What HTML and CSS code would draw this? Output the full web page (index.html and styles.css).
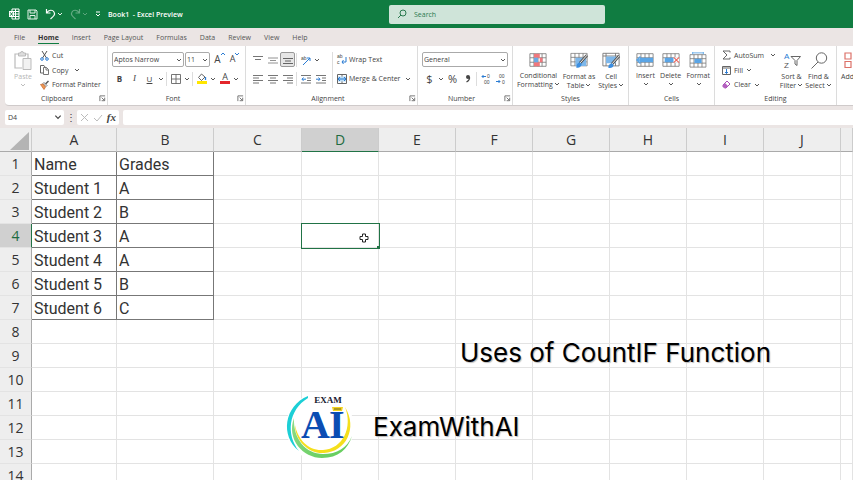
FILE: index.html
```html
<!DOCTYPE html>
<html lang="en">
<head>
<meta charset="UTF-8">
<meta name="viewport" content="width=device-width, initial-scale=1.0">
<title>Book1 - Excel Preview</title>
<link rel="stylesheet" href="styles.css">
</head>
<body>

<!-- shared icons -->
<svg class="defs" aria-hidden="true">
  <symbol id="caret" viewBox="0 0 6 6"><path d="M1 2l2 2 2-2" fill="none" stroke="currentColor" stroke-width=".9"/></symbol>
  <symbol id="launch" viewBox="0 0 8 8"><path d="M1 7V1h6M3 3l3 3M6.500 3v3.500H3" fill="none" stroke="#555" stroke-width=".9"/></symbol>
  <symbol id="sheet" viewBox="0 0 20 16"><path d="M1 1h18v14H1zM1 5.500h18M1 10.500h18M5.500 1v14M10 1v14M14.500 1v14" fill="#fff" stroke="#777" stroke-width=".9"/></symbol>
</svg>

<header class="titlebar">
  <div class="quick">
    <svg class="i-excel" width="12" height="12" viewBox="0 0 12 12"><path d="M4 1h7v10H4zM4 3.500h7M4 6h7M4 8.500h7M7.500 1v10" fill="none" stroke="#fff"/><path d="M1 3h5v6H1z" fill="#fff"/><path d="M2.200 4.300l2.600 3.400M4.800 4.300L2.200 7.700" stroke="#107c41"/></svg>
    <button class="qbtn i-save" aria-label="Save"><svg width="11" height="11" viewBox="0 0 11 11"><path d="M1 1h8l1 1v8H1zM3 1v3h5V1M3 10V6.500h5V10" fill="none" stroke="#e4f2ea"/></svg></button>
    <button class="qbtn" aria-label="Undo"><svg width="11" height="12" viewBox="0 0 11 12"><path d="M1.500 1v4h4M1.500 5C4 1.500 7.500 1.500 9 4s0 4-3.500 7" fill="none" stroke="#fff" stroke-width="1.200"/></svg><svg width="6" height="6"><use href="#caret"/></svg></button>
    <button class="qbtn faded" aria-label="Redo"><svg width="11" height="12" viewBox="0 0 11 12"><path d="M9.500 1v4h-4M9.500 5C7 1.500 3.500 1.500 2 4s0 4 3.500 7" fill="none" stroke="#fff" stroke-width="1.200"/></svg><svg width="6" height="6"><use href="#caret"/></svg></button>
    <button class="qbtn" aria-label="Customize"><svg width="6" height="6" viewBox="0 0 6 6"><path d="M1 1h4M1 3l2 2 2-2" fill="none" stroke="#fff"/></svg></button>
    <span class="book">Book1 &nbsp;- Excel Preview</span>
  </div>
  <label class="search">
    <svg width="10" height="10" viewBox="0 0 10 10"><circle cx="6" cy="4" r="3" fill="none" stroke="#2b7a50"/><path d="M4 6L1 9" stroke="#2b7a50"/></svg>
    <input type="text" placeholder="Search" aria-label="Search">
  </label>
</header>

<nav class="tabs">
  <a href="#">File</a>
  <a href="#" class="active">Home</a>
  <a href="#">Insert</a>
  <a href="#">Page Layout</a>
  <a href="#">Formulas</a>
  <a href="#">Data</a>
  <a href="#">Review</a>
  <a href="#">View</a>
  <a href="#">Help</a>
</nav>

<section class="ribbon">
  <div class="group clipboard">
    <div class="tools">
      <button class="big paste"><svg width="18" height="20" viewBox="0 0 18 20"><path d="M5 3H1v14h7M11 3h3v4" fill="none" stroke="#bbb" stroke-width="1.200"/><path d="M4.500 2h2a1.500 1.500 0 013 0h2v3h-7z" fill="#ddd" stroke="#bbb"/><path d="M9 7.500h8v11H9z" fill="#f2f2f2" stroke="#bbb"/></svg><span>Paste</span><svg width="6" height="6"><use href="#caret"/></svg></button>
      <div class="rows three">
        <button class="tool"><svg width="9" height="11" viewBox="0 0 9 11"><path d="M2 1l4.500 7M7 1L2.500 8" stroke="#555"/><circle cx="2" cy="9" r="1.300" fill="none" stroke="#2b7cd3"/><circle cx="7" cy="9" r="1.300" fill="none" stroke="#2b7cd3"/></svg>Cut</button>
        <button class="tool"><svg width="9" height="10" viewBox="0 0 9 10"><path d="M3 8H.5V.5H4L5 2" fill="none" stroke="#666"/><path d="M3.500 2.500h3l2 2v5h-5zM6 2.500v2.500h2.500" fill="#fff" stroke="#666" stroke-width=".9"/></svg>Copy<svg class="gap" width="6" height="6"><use href="#caret"/></svg></button>
        <button class="tool"><svg width="9" height="10" viewBox="0 0 9 10"><path d="M8.500 1L5.500 4" stroke="#555" stroke-width="1.500"/><path d="M4 2.500l3 3-1 1-3-3z" fill="#fff" stroke="#555" stroke-width=".8"/><path d="M.5 4.500L3 4l2.500 3L4 9.500z" fill="#ef9a55" stroke="#c4632a" stroke-width=".7"/></svg>Format Painter</button>
      </div>
    </div>
    <div class="caption"><span>Clipboard</span><svg width="7" height="7"><use href="#launch"/></svg></div>
  </div>

  <div class="group font">
    <div class="tools rows">
      <div class="row">
        <span class="combo name"><select aria-label="Font"><option>Aptos Narrow</option></select><svg width="6" height="6"><use href="#caret"/></svg></span>
        <span class="combo size"><select aria-label="Font size"><option>11</option></select><svg width="6" height="6"><use href="#caret"/></svg></span>
        <button class="ic grow" aria-label="Increase font size">A<svg width="4" height="4" viewBox="0 0 4 4"><path d="M0 3l2-2 2 2" fill="none" stroke="#2b7cd3"/></svg></button>
        <button class="ic shrink" aria-label="Decrease font size">A<svg width="4" height="4" viewBox="0 0 4 4"><path d="M0 1l2 2 2-2" fill="none" stroke="#2b7cd3"/></svg></button>
      </div>
      <div class="row">
        <button class="ic"><b>B</b></button>
        <button class="ic serif"><i>I</i></button>
        <button class="ic"><u>U</u></button>
        <button class="drop" aria-label="Underline style"><svg width="6" height="6"><use href="#caret"/></svg></button>
        <span class="sep"></span>
        <button class="ic" aria-label="Borders"><svg width="10" height="10" viewBox="0 0 10 10"><path d="M.5.500h9v9h-9zM5 0v10M0 5h10" fill="none" stroke="#666" stroke-width=".9"/></svg></button>
        <button class="drop" aria-label="More borders"><svg width="6" height="6"><use href="#caret"/></svg></button>
        <span class="sep"></span>
        <button class="ic" aria-label="Fill color"><svg width="10" height="11" viewBox="0 0 10 11"><path d="M4.500 1l3.500 3-3.500 3.500L1.500 4.500z" fill="#fff" stroke="#666"/><path d="M8.500 4v3" stroke="#2b7cd3" stroke-width="1.300"/><path d="M0 8h10v3H0z" fill="#ffe600"/></svg></button>
        <button class="drop" aria-label="More fill colors"><svg width="6" height="6"><use href="#caret"/></svg></button>
        <button class="ic fcolor" aria-label="Font color">A</button>
        <button class="drop" aria-label="More font colors"><svg width="6" height="6"><use href="#caret"/></svg></button>
      </div>
    </div>
    <div class="caption"><span>Font</span><svg width="7" height="7"><use href="#launch"/></svg></div>
  </div>

  <div class="group align">
    <div class="tools">
      <div class="rows">
        <div class="row">
          <button class="ic" aria-label="Top align"><svg width="10" height="10" viewBox="0 0 10 10"><path d="M0 1.500h10M2 4.500h6" stroke="#666" stroke-width=".9"/></svg></button>
          <button class="ic" aria-label="Middle align"><svg width="10" height="10" viewBox="0 0 10 10"><path d="M0 3h10M2 5.500h6M0 8h10" stroke="#777" stroke-width=".8"/></svg></button>
          <button class="ic pressed" aria-label="Bottom align"><svg width="10" height="10" viewBox="0 0 10 10"><path d="M0 3.500h10M2 6h6M0 8.500h10" stroke="#555" stroke-width=".9"/></svg></button>
          <span class="sep"></span>
          <button class="ic" aria-label="Orientation"><svg width="10" height="10" viewBox="0 0 10 10"><text class="mini" x="0" y="5">ab</text><path d="M2 10l7-7M9 6V3H6" fill="none" stroke="#2b7cd3"/></svg></button>
          <button class="drop" aria-label="More orientation"><svg width="6" height="6"><use href="#caret"/></svg></button>
        </div>
        <div class="row">
          <button class="ic" aria-label="Align left"><svg width="10" height="10" viewBox="0 0 10 10"><path d="M0 1.500h10M0 4h6M0 6.500h10M0 9h6" stroke="#666" stroke-width=".9"/></svg></button>
          <button class="ic" aria-label="Center"><svg width="10" height="10" viewBox="0 0 10 10"><path d="M0 1.500h10M2 4h6M0 6.500h10M2 9h6" stroke="#666" stroke-width=".9"/></svg></button>
          <button class="ic" aria-label="Align right"><svg width="10" height="10" viewBox="0 0 10 10"><path d="M0 1.500h10M4 4h6M0 6.500h10M4 9h6" stroke="#666" stroke-width=".9"/></svg></button>
          <span class="sep"></span>
          <button class="ic" aria-label="Decrease indent"><svg width="10" height="10" viewBox="0 0 10 10"><path d="M0 1.500h10M6 4h4M6 6.500h4M0 9h10" stroke="#666" stroke-width=".9"/><path d="M5 5.200H1M2.500 3.500L1 5.200l1.500 1.700" fill="none" stroke="#2b7cd3"/></svg></button>
          <button class="ic" aria-label="Increase indent"><svg width="10" height="10" viewBox="0 0 10 10"><path d="M0 1.500h10M6 4h4M6 6.500h4M0 9h10" stroke="#666" stroke-width=".9"/><path d="M0 5.200h4M2.500 3.500L4 5.200 2.500 6.900" fill="none" stroke="#2b7cd3"/></svg></button>
        </div>
      </div>
      <span class="sep tall"></span>
      <div class="rows wrap">
        <button class="tool row"><svg width="10" height="11" viewBox="0 0 10 11"><text class="mini" x="0" y="4">ab</text><text class="mini" x="0" y="10">c</text><path d="M9 3v5H5M6.500 6L5 8l1.500 2" fill="none" stroke="#2b7cd3"/></svg>Wrap Text</button>
        <button class="tool row"><svg width="10" height="10" viewBox="0 0 10 10"><path d="M.5.500h9v9h-9zM5 .5v9" fill="none" stroke="#666"/><path d="M1 2.500h8v5H1z" fill="#b9dcf6"/><path d="M1 5h8M3 3L1 5l2 2M7 3l2 2-2 2" fill="none" stroke="#2b7cd3"/></svg>Merge &amp; Center<svg class="gap" width="6" height="6"><use href="#caret"/></svg></button>
      </div>
    </div>
    <div class="caption"><span>Alignment</span><svg width="7" height="7"><use href="#launch"/></svg></div>
  </div>

  <div class="group number">
    <div class="tools rows">
      <div class="row">
        <span class="combo format"><select aria-label="Number format"><option>General</option></select><svg width="6" height="6"><use href="#caret"/></svg></span>
      </div>
      <div class="row signs">
        <button class="ic">$</button>
        <button class="drop" aria-label="More currencies"><svg width="6" height="6"><use href="#caret"/></svg></button>
        <button class="ic pct">%</button>
        <button class="ic" aria-label="Comma style"><svg width="6" height="9" viewBox="0 0 6 9"><circle cx="3" cy="3" r="2" fill="#444"/><path d="M4.500 3q.5 3-3 5" fill="none" stroke="#444" stroke-width="1.200"/></svg></button>
        <span class="sep"></span>
        <button class="ic" aria-label="Increase decimal"><svg width="10" height="10" viewBox="0 0 10 10"><text class="mini" x="6" y="4">0</text><text class="mini" x="3" y="10">00</text><path d="M5 2.500H1M2.500 1L1 2.500 2.500 4" fill="none" stroke="#2b7cd3"/></svg></button>
        <button class="ic" aria-label="Decrease decimal"><svg width="10" height="10" viewBox="0 0 10 10"><text class="mini" x="3" y="4">00</text><text class="mini" x="6" y="10">0</text><path d="M0 7.500h4M2.500 6L4 7.500 2.500 9" fill="none" stroke="#2b7cd3"/></svg></button>
      </div>
    </div>
    <div class="caption"><span>Number</span><svg width="7" height="7"><use href="#launch"/></svg></div>
  </div>

  <div class="group styles">
    <div class="tools">
      <button class="big"><svg width="18" height="16" viewBox="0 0 20 16"><use href="#sheet"/><path d="M5.500 1H12v4.500H5.500zM5.500 10.500H12V15H5.500z" fill="#f0777c"/><path d="M5.500 5.500H10v5H5.500z" fill="#6aa9e6"/><path d="M12 5.500h3v5h-3z" fill="#f0777c"/></svg><span>Conditional<br>Formatting<svg width="6" height="6"><use href="#caret"/></svg></span></button>
      <button class="big"><svg width="18" height="17" viewBox="0 0 20 18"><use href="#sheet" width="20" height="16"/><path d="M6 6h12v9H6z" fill="#7db7ea"/><path d="M19 3l-8 9" stroke="#555" stroke-width="3"/><path d="M19 3l-8 9" stroke="#fff"/><path d="M11 11q-4 1-4 6 5 1 6-4z" fill="#3b8ee0"/></svg><span>Format as<br>Table<svg width="6" height="6"><use href="#caret"/></svg></span></button>
      <button class="big"><svg width="18" height="17" viewBox="0 0 20 18"><path d="M1 1h18v14H1zM1 4h18M4.500 1v14M15 1v14" fill="#fff" stroke="#777"/><path d="M4.500 4.500h11V12h-11z" fill="#7db7ea"/><path d="M19 4l-8 9" stroke="#555" stroke-width="3"/><path d="M19 4l-8 9" stroke="#fff"/><path d="M11 12q-4 1-4 5 5 1 6-3z" fill="#3b8ee0"/></svg><span>Cell<br>Styles<svg width="6" height="6"><use href="#caret"/></svg></span></button>
    </div>
    <div class="caption"><span>Styles</span></div>
  </div>

  <div class="group cells">
    <div class="tools">
      <button class="big"><svg width="18" height="16" viewBox="0 0 20 16"><use href="#sheet"/><path d="M4 5.500h15v5H4z" fill="#5aa5e6"/><path d="M5 4L1 8l4 4M1 8h6" fill="none" stroke="#5aa5e6" stroke-width="1.500"/></svg><span>Insert<br><svg width="6" height="6"><use href="#caret"/></svg></span></button>
      <button class="big"><svg width="18" height="16" viewBox="0 0 20 16"><use href="#sheet"/><path d="M3 5.500h10v5H3z" fill="#5aa5e6"/><path d="M13 5h6v6h-6z" fill="#fff"/><path d="M13 5l6 6M19 5l-6 6" stroke="#e8665d" stroke-width="1.300"/></svg><span>Delete<br><svg width="6" height="6"><use href="#caret"/></svg></span></button>
      <button class="big"><svg width="18" height="16" viewBox="0 0 20 18"><use href="#sheet" y="2" width="20" height="16"/><path d="M6 7.500h8v5H6z" fill="#5aa5e6"/><path d="M4 1h12M4 0v2.500M16 0v2.500" stroke="#5aa5e6"/></svg><span>Format<br><svg width="6" height="6"><use href="#caret"/></svg></span></button>
    </div>
    <div class="caption"><span>Cells</span></div>
  </div>

  <div class="group editing">
    <div class="tools">
      <div class="rows three">
        <button class="tool"><svg width="9" height="10" viewBox="0 0 9 10"><path d="M8 2.500V1H1l4 4-4 4h7V7.500" fill="none" stroke="#666"/></svg>AutoSum<svg class="gap" width="6" height="6"><use href="#caret"/></svg></button>
        <button class="tool"><svg width="9" height="9" viewBox="0 0 9 9"><path d="M.5.500h8v8h-8zM.5 2h8" fill="none" stroke="#666"/><path d="M4.500 3v4.500M3 6l1.500 1.500L6 6" fill="none" stroke="#2b7cd3"/></svg>Fill<svg width="6" height="6"><use href="#caret"/></svg></button>
        <button class="tool"><svg width="9" height="9" viewBox="0 0 9 9"><path d="M1 5l4-4 3 3-4 4H2.500L1 6.500z" fill="#fff" stroke="#a94fb5"/><path d="M1 5l2-2 3 3-2 2H2.500L1 6.500z" fill="#b45fc0"/></svg>Clear<svg width="6" height="6"><use href="#caret"/></svg></button>
      </div>
      <button class="big"><svg width="18" height="17" viewBox="0 0 18 17"><text class="az" x="1" y="7" fill="#2b7cd3">A</text><text class="az" x="1" y="16" fill="#555">Z</text><path d="M8 4.500h9.500l-3.500 4v5l-2-1.500V8.500z" fill="#fff" stroke="#666"/></svg><span>Sort &amp;<br>Filter<svg width="6" height="6"><use href="#caret"/></svg></span></button>
      <button class="big"><svg width="18" height="17" viewBox="0 0 18 17"><circle cx="11.500" cy="6" r="5.200" fill="none" stroke="#666"/><path d="M8 10l-6.500 6.500" stroke="#666"/></svg><span>Find &amp;<br>Select<svg width="6" height="6"><use href="#caret"/></svg></span></button>
    </div>
    <div class="caption"><span>Editing</span></div>
  </div>

  <div class="group addins">
    <div class="tools">
      <button class="big"><svg width="18" height="17" viewBox="0 0 18 17"><path d="M1 1h6v6H1zM1 9.500h6v6H1zM10 9.500h6v6h-6zM13 1l3 3-3 3-3-3z" fill="#fff" stroke="#dc7168" stroke-width="1.200"/></svg><span>Add-ins</span></button>
    </div>
    <div class="caption"><span>Add-ins</span></div>
  </div>
</section>

<section class="formulabar">
  <label class="namebox"><input type="text" value="D4" aria-label="Name box"><svg width="8" height="8" viewBox="0 0 6 6"><use href="#caret"/></svg></label>
  <span class="dots">&#8942;</span>
  <div class="fxbox">
    <button aria-label="Cancel"><svg width="9" height="9" viewBox="0 0 9 9"><path d="M1 1l7 7M8 1L1 8" stroke="#bbb"/></svg></button>
    <button aria-label="Enter"><svg width="10" height="9" viewBox="0 0 10 9"><path d="M1 5l3 3 5-6" fill="none" stroke="#bbb"/></svg></button>
    <button class="fx">fx</button>
  </div>
  <input class="formula" type="text" aria-label="Formula">
</section>

<main class="grid">
  <table class="cells-table">
    <colgroup>
      <col class="c-head"><col class="c-a"><col class="c-b"><col class="c-c">
      <col class="c-std"><col class="c-std"><col class="c-std"><col class="c-std"><col class="c-std"><col class="c-std"><col class="c-std"><col>
    </colgroup>
    <thead>
      <tr><th class="corner"><svg width="19" height="18" viewBox="0 0 19 18"><path d="M19 0v18H0z" fill="#b4b4b4"/></svg></th><th>A</th><th>B</th><th>C</th><th class="sel">D</th><th>E</th><th>F</th><th>G</th><th>H</th><th>I</th><th>J</th><th></th></tr>
    </thead>
    <tbody>
      <tr><th>1</th><td class="data">Name</td><td class="data">Grades</td><td></td><td></td><td></td><td></td><td></td><td></td><td></td><td></td><td></td></tr>
      <tr><th>2</th><td class="data">Student 1</td><td class="data">A</td><td></td><td></td><td></td><td></td><td></td><td></td><td></td><td></td><td></td></tr>
      <tr><th>3</th><td class="data">Student 2</td><td class="data">B</td><td></td><td></td><td></td><td></td><td></td><td></td><td></td><td></td><td></td></tr>
      <tr><th class="sel">4</th><td class="data">Student 3</td><td class="data">A</td><td></td><td class="current"><svg class="cursor" width="10" height="10" viewBox="0 0 10 10"><path d="M3.500 1h3v2.500H9v3H6.500V9h-3V6.500H1v-3h2.500z" fill="#fff" stroke="#222"/></svg></td><td></td><td></td><td></td><td></td><td></td><td></td><td></td></tr>
      <tr><th>5</th><td class="data">Student 4</td><td class="data">A</td><td></td><td></td><td></td><td></td><td></td><td></td><td></td><td></td><td></td></tr>
      <tr><th>6</th><td class="data">Student 5</td><td class="data">B</td><td></td><td></td><td></td><td></td><td></td><td></td><td></td><td></td><td></td></tr>
      <tr><th>7</th><td class="data">Student 6</td><td class="data">C</td><td></td><td></td><td></td><td></td><td></td><td></td><td></td><td></td><td></td></tr>
      <tr><th>8</th><td></td><td></td><td></td><td></td><td></td><td></td><td></td><td></td><td></td><td></td><td></td></tr>
      <tr><th>9</th><td></td><td></td><td></td><td></td><td></td><td></td><td></td><td></td><td></td><td></td><td></td></tr>
      <tr><th>10</th><td></td><td></td><td></td><td></td><td></td><td></td><td></td><td></td><td></td><td></td><td></td></tr>
      <tr><th>11</th><td></td><td></td><td></td><td></td><td></td><td></td><td></td><td></td><td></td><td></td><td></td></tr>
      <tr><th>12</th><td></td><td></td><td></td><td></td><td></td><td></td><td></td><td></td><td></td><td></td><td></td></tr>
      <tr><th>13</th><td></td><td></td><td></td><td></td><td></td><td></td><td></td><td></td><td></td><td></td><td></td></tr>
      <tr><th>14</th><td></td><td></td><td></td><td></td><td></td><td></td><td></td><td></td><td></td><td></td><td></td></tr>
    </tbody>
  </table>

  <div class="overlay headline">Uses of CountIF Function</div>
  <div class="overlay brand">
    <svg width="68" height="68" viewBox="0 0 68 68">
      <defs><linearGradient id="ring" x1="0" y1="0" x2="1" y2="1"><stop offset="0" stop-color="#8fdc8a"/><stop offset="1" stop-color="#5fcb57"/></linearGradient></defs>
      <circle cx="34" cy="34" r="34" fill="#fff"/>
      <path d="M22 3C-2 13-6 43 13 58 0 42 2 17 22 5z" fill="#1ccfd6"/>
      <path d="M8 25C0 46 17 65 36 65c16 0 26-9 30-22-5 12-15 18-29 18C20 61 7 46 8 25z" fill="url(#ring)"/>
      <path d="M9 32C9 47 22 61 38 60 60 59 72 35 59 14c8 20-2 42-22 43C23 58 12 47 9 32z" fill="#f5df1c"/>
      <text class="logo-top" x="42" y="10" text-anchor="middle">EXAM</text>
      <text class="logo-main" x="15" y="45">A</text>
      <text class="logo-main" x="43" y="45">I</text>
      <path d="M46 14h11l-1 4h-9z" fill="#f3d21c"/><path d="M48 16h7" stroke="#6b6420"/>
    </svg>
    <span>ExamWithAI</span>
  </div>
</main>

</body>
</html>
```
FILE: styles.css
```css
* {
  box-sizing: border-box;
}
body {
  margin: 0;
  height: 100vh;
  overflow: hidden;
  display: flex;
  flex-direction: column;
  background: #ebe5e4;
  color: #444;
  font-family: "Open Sans", "Noto Sans", sans-serif;
  font-size: 7px;
  line-height: 9px;
}
button, input, select {
  font: inherit;
  color: inherit;
  margin: 0;
  padding: 0;
  border: none;
  background: none;
}
svg {
  flex: none;
  display: block;
  overflow: visible;
}
.defs {
  position: absolute;
  width: 0;
  height: 0;
}

/* title bar */
.titlebar {
  flex: none;
  height: 28px;
  display: flex;
  align-items: center;
  background: #107c41;
  color: #fff;
}
.quick {
  flex: 0 0 389px;
  display: flex;
  align-items: center;
  gap: 7px;
  padding-left: 8px;
}
.qbtn {
  display: flex;
  align-items: center;
  gap: 1px;
}
.faded {
  opacity: 0.35;
}
.book {
  font-weight: 600;
}
.search {
  flex: 0 1 216px;
  height: 19px;
  display: flex;
  align-items: center;
  gap: 7px;
  padding-left: 8px;
  background: #cfe4d9;
  border-radius: 2px;
}
.search input {
  flex: 1;
  min-width: 0;
}
.search input::placeholder {
  color: #2b7a50;
  opacity: 1;
}

/* tabs */
.tabs {
  flex: none;
  height: 18px;
  display: flex;
  gap: 13px;
  padding: 5px 14px 0;
}
.tabs a {
  color: #555;
  text-decoration: none;
  height: 11px;
}
.tabs .active {
  color: #333;
  font-weight: 700;
  border-bottom: 1px solid #107c41;
}

/* ribbon */
.ribbon {
  flex: none;
  height: 60px;
  margin-left: 5px;
  display: flex;
  overflow: hidden;
  background: #fff;
  border-radius: 4px 0 0 4px;
  border-bottom: 1px solid #cfcaca;
}
.group {
  flex: none;
  display: flex;
  flex-direction: column;
  border-right: 1px solid #dcdcdc;
}
.clipboard { width: 103px; }
.font { width: 138px; }
.align { width: 172px; }
.number { width: 95px; }
.styles { width: 116px; }
.cells { width: 86px; }
.editing { width: 122px; }
.addins { width: 60px; }
.tools {
  height: 46px;
  display: flex;
}
.caption {
  height: 13px;
  display: flex;
  align-items: center;
  padding: 0 1px;
}
.clipboard .caption {
  padding-left: 10px;
}
.caption span {
  flex: 1;
  text-align: center;
}
.rows {
  display: flex;
  flex-direction: column;
  padding-top: 4px;
}
.rows.three {
  padding-top: 2px;
}
.row {
  height: 19px;
  display: flex;
  align-items: center;
}
.tool {
  display: flex;
  align-items: center;
  gap: 3px;
  white-space: nowrap;
}
.wrap .tool {
  gap: 2px;
}
.three .tool {
  height: 15px;
}
.gap {
  margin-left: 3px;
}
.ic {
  width: 15px;
  height: 15px;
  display: flex;
  align-items: center;
  justify-content: center;
  font-size: 8px;
}
.serif {
  font-family: "Liberation Serif", serif;
  font-size: 9px;
}
.grow, .shrink {
  align-items: flex-start;
  font-size: 10px;
  line-height: 14px;
}
.shrink {
  font-size: 9px;
}
.fcolor {
  height: 11px;
  width: 10px;
  margin: 0 2px 0 3px;
  font-size: 9px;
  line-height: 8px;
  border-bottom: 3px solid #e3262b;
}
.pressed {
  border: 1px solid #999;
  border-radius: 2px;
  background: #e6e6e6;
}
.drop {
  width: 8px;
  height: 15px;
  display: flex;
  align-items: center;
  justify-content: center;
}
.sep {
  width: 1px;
  height: 14px;
  margin: 0 1px;
  background: #ddd;
}
.tall {
  height: 36px;
  margin: 6px 4px 0;
}
.mini {
  font-family: "Liberation Sans", sans-serif;
  font-size: 5px;
  fill: #444;
}
.az {
  font-family: "Liberation Sans", sans-serif;
  font-size: 8px;
}
.big {
  display: flex;
  flex-direction: column;
  align-items: center;
  gap: 3px;
  padding-top: 6px;
  white-space: nowrap;
}
.big span svg {
  display: inline-block;
  margin-left: 1px;
}
.combo {
  position: relative;
  height: 15px;
  display: flex;
  border: 1px solid #aaa;
  border-radius: 2px;
}
.combo select {
  appearance: none;
  width: 100%;
  padding-left: 1px;
}
.combo svg {
  position: absolute;
  right: 1px;
  top: 4px;
  pointer-events: none;
}
.name { width: 72px; }
.size { width: 25px; margin-left: 1px; margin-right: 2px; }
.format { width: 86px; }
.paste {
  width: 34px;
  padding-top: 5px;
  gap: 1px;
  color: #b5b5b5;
}
.font .tools, .number .tools, .align .tools {
  padding-left: 4px;
}
.clipboard .tools { padding-left: 1px; }
.pct { font-size: 11px; }
.signs .ic { font-size: 11px; }
.styles .tools { padding: 0 4px; justify-content: space-between; }
.cells .tools { padding: 0 4px 0 7px; justify-content: space-between; }
.editing .tools { padding-left: 7px; }
.editing .three { width: 56px; }
.editing .big { width: 27px; }
.addins .tools { padding-left: 4px; }

/* formula bar */
.formulabar {
  flex: none;
  height: 22px;
  display: flex;
  align-items: center;
  padding-left: 5px;
}
.namebox {
  width: 59px;
  height: 15px;
  display: flex;
  align-items: center;
  padding: 0 2px 0 3px;
  background: #fff;
  border-radius: 2px;
}
.namebox input {
  flex: 1;
  min-width: 0;
}
.dots {
  width: 13px;
  text-align: center;
  font-size: 10px;
}
.fxbox {
  width: 42px;
  height: 15px;
  display: flex;
  align-items: center;
  justify-content: space-between;
  padding: 0 3px;
  background: #fff;
  border-radius: 2px;
}
.fx {
  font-family: "Liberation Serif", serif;
  font-style: italic;
  font-weight: bold;
  font-size: 11px;
}
.formula {
  flex: 1;
  height: 15px;
  margin-left: 4px;
  background: #fff;
  border-radius: 2px 0 0 2px;
}

/* sheet */
.grid {
  position: relative;
  flex: 1;
  overflow: hidden;
  background: #fff;
}
.cells-table {
  width: 100%;
  table-layout: fixed;
  border-spacing: 0;
}
.c-head { width: 32px; }
.c-a { width: 85px; }
.c-b { width: 97px; }
.c-c { width: 88px; }
.c-std { width: 77px; }
.cells-table th, .cells-table td {
  height: 24px;
  padding: 0;
  line-height: 20px;
  border-right: 1px solid #e3e3e3;
  border-bottom: 1px solid #e3e3e3;
}
.cells-table th {
  background: #eee;
  color: #333;
  font-weight: 400;
  font-size: 14px;
}
.cells-table thead th {
  border-right-color: #ccc;
  border-bottom-color: #aaa;
}
.cells-table tbody th {
  border-right-color: #aaa;
}
.cells-table .corner svg {
  margin: 2px 2px 0 auto;
}
.cells-table .sel {
  background: #d0d0d0;
  color: #1e6b41;
}
.cells-table thead .sel {
  border-bottom-color: #217346;
}
.cells-table tbody .sel {
  border-right-color: #217346;
}
.cells-table .data {
  padding: 2px 0 0 2px;
  font-family: Roboto, sans-serif;
  font-size: 16px;
  color: #333;
  border-color: #777;
}
.cells-table .current {
  position: relative;
  outline: 1px solid #217346;
}
.current::after {
  content: "";
  position: absolute;
  right: -2px;
  bottom: -2px;
  width: 3px;
  height: 3px;
  background: #217346;
}
.cursor {
  position: absolute;
  right: 9px;
  top: 9px;
}

/* captions over the sheet */
.overlay {
  position: absolute;
  font-family: Inter, sans-serif;
  font-size: 26px;
  line-height: 32px;
  color: #000;
  text-shadow: 1px 1px 1px #bbb;
  white-space: nowrap;
}
.headline {
  left: 460px;
  top: 209px;
}
.brand {
  left: 286px;
  top: 265px;
  display: flex;
  align-items: center;
  gap: 19px;
}
.brand svg {
  text-shadow: none;
}
.logo-top {
  font-family: "Liberation Serif", serif;
  font-weight: bold;
  font-size: 9px;
  fill: #15182e;
}
.logo-main {
  font-family: "Liberation Serif", serif;
  font-weight: bold;
  font-size: 40px;
  fill: #0b4db3;
}
```
